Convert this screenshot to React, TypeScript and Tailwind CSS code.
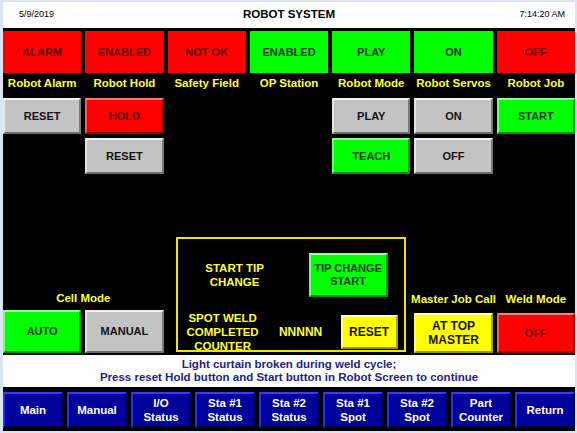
import React from 'react';

type Tone = 'gray' | 'red' | 'green' | 'yellow';

const bevel: Record<Tone, string> = {
  gray: 'bg-[#c3c3c3] text-[#141414] border-t-[#f2f2f2] border-l-[#e4e4e4] border-r-[#7a7a7a] border-b-[#6a6a6a]',
  red: 'bg-[#ff0000] text-[#5e0000] border-t-[#ff7a7a] border-l-[#ff5a5a] border-r-[#a40000] border-b-[#920000]',
  green: 'bg-[#00ff00] text-[#083a08] border-t-[#9aff9a] border-l-[#74ff74] border-r-[#00a400] border-b-[#009200]',
  yellow: 'bg-[#ffff00] text-[#161600] border-t-[#ffffa8] border-l-[#ffff80] border-r-[#a4a400] border-b-[#929200]',
};

const flat: Record<'red' | 'green', string> = {
  red: 'bg-[#ff0000] text-[#640000]',
  green: 'bg-[#00ff00] text-[#0a330a]',
};

function Btn({ tone, children, className = '' }: { tone: Tone; children: React.ReactNode; className?: string }) {
  return (
    <div
      className={`flex items-center justify-center border-2 text-center text-[11px] font-bold leading-[13px] ${bevel[tone]} ${className}`}
    >
      {children}
    </div>
  );
}

const status: { text: string; tone: 'red' | 'green'; label: string }[] = [
  { text: 'ALARM', tone: 'red', label: 'Robot Alarm' },
  { text: 'ENABLED', tone: 'red', label: 'Robot Hold' },
  { text: 'NOT OK', tone: 'red', label: 'Safety Field' },
  { text: 'ENABLED', tone: 'green', label: 'OP Station' },
  { text: 'PLAY', tone: 'green', label: 'Robot Mode' },
  { text: 'ON', tone: 'green', label: 'Robot Servos' },
  { text: 'OFF', tone: 'red', label: 'Robot Job' },
];

const nav = [
  ['Main'],
  ['Manual'],
  ['I/O', 'Status'],
  ['Sta #1', 'Status'],
  ['Sta #2', 'Status'],
  ['Sta #1', 'Spot'],
  ['Sta #2', 'Spot'],
  ['Part', 'Counter'],
  ['Return'],
];

export default function App() {
  return (
    <div className="w-[577px] h-[433px] bg-[#dbe5f1] pl-[3px] pr-[2px] pt-[2px] pb-[2px] font-['Liberation_Sans',Arial,sans-serif] overflow-hidden">
      <div className="flex h-full flex-col">
        {/* header */}
        <div className="grid h-[26px] shrink-0 grid-cols-3 items-center bg-white text-black">
          <div className="pl-[16px] text-[9px]">5/9/2019</div>
          <div className="text-center text-[11.5px] font-bold">ROBOT SYSTEM</div>
          <div className="pr-[10px] text-right text-[9px]">7:14:20 AM</div>
        </div>

        {/* main black panel */}
        <div className="flex flex-1 flex-col bg-black pt-[3px] pb-[2px]">
          <div className="grid h-[42px] grid-cols-7 gap-x-[4px]">
            {status.map((s, i) => (
              <div key={i} className={`flex items-center justify-center text-[11px] font-bold ${flat[s.tone]}`}>
                {s.text}
              </div>
            ))}
          </div>
          <div className="grid h-[22px] grid-cols-7 gap-x-[4px]">
            {status.map((s, i) => (
              <div key={i} className="flex items-center justify-center whitespace-nowrap text-[11.5px] font-bold text-[#ffff33]">
                {s.label}
              </div>
            ))}
          </div>
          <div className="mt-[3px] grid h-[36px] grid-cols-7 gap-x-[4px]">
            <Btn tone="gray">RESET</Btn>
            <Btn tone="red">HOLD</Btn>
            <div />
            <div />
            <Btn tone="gray">PLAY</Btn>
            <Btn tone="gray">ON</Btn>
            <Btn tone="green">START</Btn>
          </div>
          <div className="mt-[4px] grid h-[36px] grid-cols-7 gap-x-[4px]">
            <div />
            <Btn tone="gray">RESET</Btn>
            <div />
            <div />
            <Btn tone="green">TEACH</Btn>
            <Btn tone="gray">OFF</Btn>
            <div />
          </div>

          <div className="flex-1" />

          <div className="grid grid-cols-7 items-end gap-x-[4px]">
            <div className="col-span-2">
              <div className="flex h-[22px] items-center justify-center text-[11.5px] font-bold text-[#ffff33]">Cell Mode</div>
              <div className="grid h-[43px] grid-cols-2 gap-x-[4px]">
                <Btn tone="green">AUTO</Btn>
                <Btn tone="gray">MANUAL</Btn>
              </div>
            </div>

            <div className="col-span-3 mb-[1px] ml-[8px] h-[115px] w-[230px] border-2 border-[#e8e800] pt-[14px] text-[11.5px] font-bold leading-[14px] text-[#ffff33]">
              <div className="flex items-center">
                <div className="w-[114px] text-center">
                  START TIP
                  <br />
                  CHANGE
                </div>
                <Btn tone="green" className="ml-[17px] h-[44px] w-[79px]">
                  TIP CHANGE
                  <br />
                  START
                </Btn>
              </div>
              <div className="mt-[14px] flex items-center">
                <div className="w-[90px] text-center">
                  SPOT WELD
                  <br />
                  COMPLETED
                  <br />
                  COUNTER
                </div>
                <div className="ml-[10px] w-[46px] text-center text-[12px]">NNNNN</div>
                <Btn tone="yellow" className="ml-[17px] h-[34px] w-[57px] text-[12px]">RESET</Btn>
              </div>
            </div>

            <div>
              <div className="mb-[2px] flex h-[22px] items-center justify-center whitespace-nowrap text-[11.5px] font-bold text-[#ffff33]">
                Master Job Call
              </div>
              <Btn tone="yellow" className="h-[40px] text-[12px] leading-[14px]">
                AT TOP
                <br />
                MASTER
              </Btn>
            </div>
            <div>
              <div className="mb-[2px] flex h-[22px] items-center justify-center whitespace-nowrap text-[11.5px] font-bold text-[#ffff33]">
                Weld Mode
              </div>
              <Btn tone="red" className="h-[40px]">OFF</Btn>
            </div>
          </div>
        </div>

        {/* message */}
        <div className="flex h-[32px] shrink-0 flex-col items-center justify-center bg-white text-[11.5px] font-bold leading-[13px] text-[#1e1e84]">
          <div>Light curtain broken during weld cycle;</div>
          <div>Press reset Hold button and Start button in Robot Screen to continue</div>
        </div>

        {/* nav */}
        <div className="flex h-[44px] shrink-0 gap-x-[4px] bg-black pt-[5px] pb-[3px]">
          {nav.map((n, i) => (
            <div
              key={i}
              className="flex flex-1 flex-col items-center justify-center border-2 border-t-[#3a3aff] border-l-[#2c2cf0] border-r-[#000050] border-b-[#00003c] bg-[#00009a] text-center text-[11.5px] font-bold leading-[14px] text-white"
            >
              {n.map((l, j) => (
                <div key={j}>{l}</div>
              ))}
            </div>
          ))}
        </div>
      </div>
    </div>
  );
}
